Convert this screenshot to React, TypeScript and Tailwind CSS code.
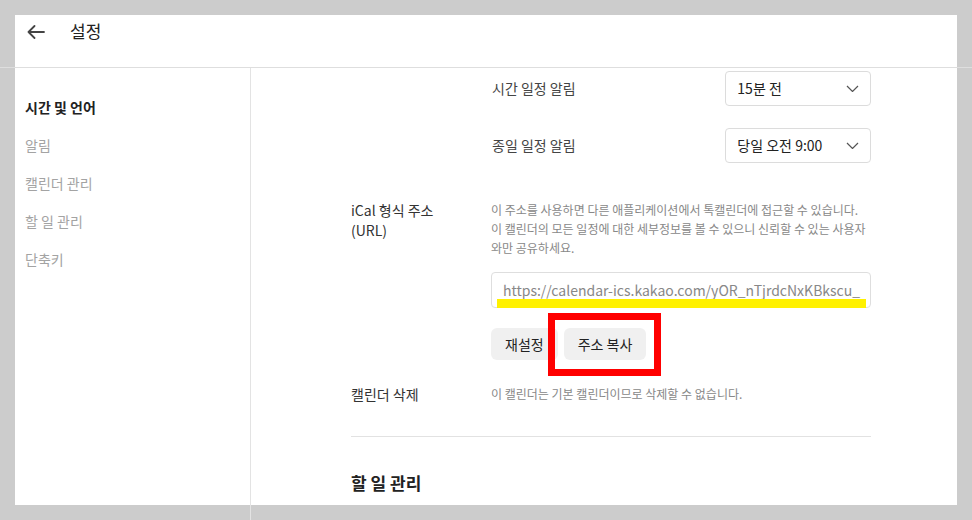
import React from "react";

const menu = [
  { label: "시간 및 언어", active: true },
  { label: "알림" },
  { label: "캘린더 관리" },
  { label: "할 일 관리" },
  { label: "단축키" },
];

const alarms = [
  { label: "시간 일정 알림", value: "15분 전" },
  { label: "종일 일정 알림", value: "당일 오전 9:00" },
];

const icalNotice = [
  "이 주소를 사용하면 다른 애플리케이션에서 톡캘린더에 접근할 수 있습니다.",
  "이 캘린더의 모든 일정에 대한 세부정보를 볼 수 있으니 신뢰할 수 있는 사용자",
  "와만 공유하세요.",
];

function BackArrow() {
  return (
    <svg width="18" height="14" viewBox="0 0 18 14" fill="none">
      <path d="M17 7H1.5M7.5 1L1.5 7l6 6" stroke="#444" strokeWidth="1.8" strokeLinecap="round" strokeLinejoin="round" />
    </svg>
  );
}

function Chevron() {
  return (
    <svg width="13" height="7" viewBox="0 0 13 7" fill="none">
      <path d="M1 1l5.5 5.5L12 1" stroke="#555" strokeWidth="1.2" />
    </svg>
  );
}

function SelectBox({ value }: { value: string }) {
  return (
    <div className="flex h-[35px] w-[146px] items-center justify-between rounded-[4px] border border-[#dcdcdc] pl-[11px] pr-[11px] text-[14px] text-[#222]">
      <span>{value}</span>
      <Chevron />
    </div>
  );
}

export default function App() {
  return (
    <div className="flex h-[520px] w-[972px] flex-col overflow-hidden bg-[#cccccc] font-['Noto_Sans_CJK_KR',sans-serif]">
      {/* Header */}
      <div className="px-[15px] pt-[15px]">
        <div className="flex h-[52px] items-start bg-white pl-[12px] pt-[9px]">
          <div className="flex h-[16px] items-center">
            <BackArrow />
          </div>
          <h1 className="ml-[25px] mt-[-6px] text-[17px] leading-[26px] text-[#222]">설정</h1>
        </div>
      </div>
      <div className="h-px bg-[#dedede]" />

      <div className="flex flex-1">
        <div className="w-[15px]" />

        {/* Sidebar */}
        <aside className="flex w-[236px] flex-col border-r border-[#e3e3e3]">
          <nav className="flex flex-1 flex-col gap-[18px] bg-white pl-[10px] pt-[29px]">
            {menu.map((item) => (
              <div
                key={item.label}
                className={`text-[14px] leading-[20px] ${item.active ? "font-bold text-[#222]" : "text-[#a3a3a3]"}`}
              >
                {item.label}
              </div>
            ))}
          </nav>
          <div className="h-[15px]" />
        </aside>

        {/* Content */}
        <main className="flex flex-1 flex-col">
          <div className="flex-1 overflow-hidden bg-white">
            <div className="ml-[100px] w-[520px] pt-[3px]">
              <div className="flex flex-col gap-[22px]">
                {alarms.map((a) => (
                  <div key={a.label} className="flex items-center pl-[141px]">
                    <div className="w-[234px] text-[14px] text-[#444]">{a.label}</div>
                    <SelectBox value={a.value} />
                  </div>
                ))}
              </div>

              <div className="mt-[37px] flex">
                <div className="w-[140px] text-[14px] leading-[20px] text-[#333]">
                  iCal 형식 주소
                  <br />
                  (URL)
                </div>
                <div className="w-[380px]">
                  <p className="text-[12px] leading-[19px] text-[#888]">
                    {icalNotice.map((line) => (
                      <span key={line} className="block whitespace-nowrap">
                        {line}
                      </span>
                    ))}
                  </p>
                  <div className="relative mt-[15px]">
                    <div className="flex h-[36px] items-center overflow-hidden whitespace-nowrap rounded-[4px] border border-[#dedede] pl-[11px] text-[14px] text-[#888]">
                      https://calendar-ics.kakao.com/yOR_nTjrdcNxKBkscu_
                    </div>
                    <div className="absolute left-[6px] top-[27px] h-[9px] w-[369px] bg-[#fff100]" />
                  </div>
                  <div className="relative mt-[20px] flex gap-[6px]">
                    <button className="h-[32px] rounded-[6px] bg-[#f0f0f0] px-[14px] text-[14px] text-[#222]">재설정</button>
                    <button className="h-[32px] rounded-[6px] bg-[#f0f0f0] px-[14px] text-[14px] text-[#222]">주소 복사</button>
                    <div className="absolute left-[57px] top-[-15px] h-[63px] w-[113px] border-[7px] border-[#ff0000]" />
                  </div>
                </div>
              </div>

              <div className="mt-[24px] flex items-center">
                <div className="w-[140px] text-[14px] leading-[20px] text-[#333]">캘린더 삭제</div>
                <div className="text-[12px] text-[#888]">이 캘린더는 기본 캘린더이므로 삭제할 수 없습니다.</div>
              </div>

              <div className="mt-[32px] h-px bg-[#e2e2e2]" />

              <h2 className="mt-[34px] text-[17px] font-bold leading-[24px] text-[#222]">할 일 관리</h2>
            </div>
          </div>
          <div className="h-[15px]" />
        </main>

        <div className="w-[15px]" />
      </div>
    </div>
  );
}
